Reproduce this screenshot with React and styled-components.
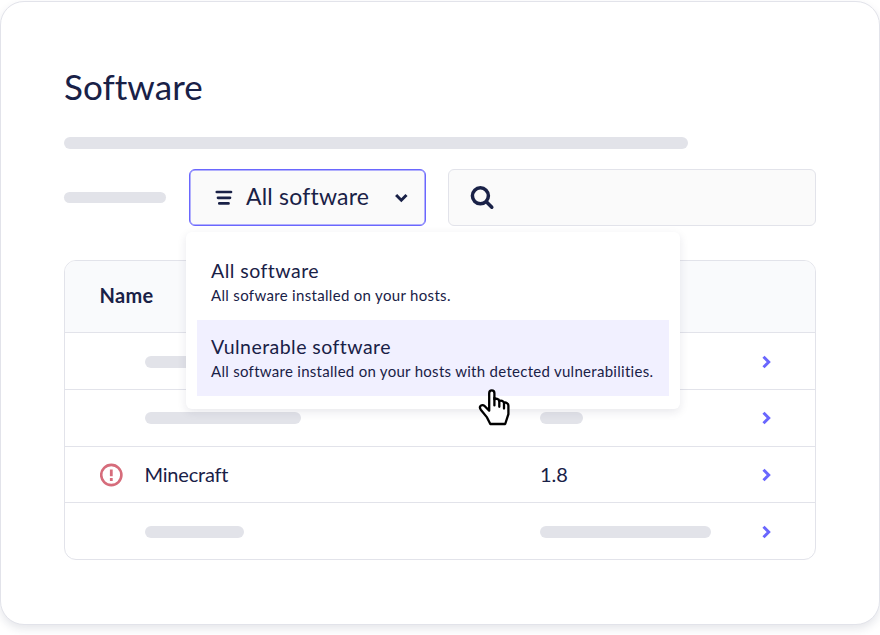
import React from 'react';
import styled, { createGlobalStyle } from 'styled-components';

const GlobalStyle = createGlobalStyle`
  * { box-sizing: border-box; }
  body {
    margin: 0;
    background: #fff;
    color: #192147;
    font-family: Lato, "Open Sans", sans-serif;
    overflow: hidden;
  }
  svg { display: block; flex: none; }
`;

const Page = styled.div`
  height: 635px;
  padding-top: 1px;
`;

const Card = styled.main`
  width: 880px;
  height: 624px;
  padding: 62px 63px 0;
  border: 1px solid #e2e3ea;
  border-radius: 24px;
  background: #fff;
  box-shadow: 0 4px 8px rgba(25, 33, 71, 0.11);
`;

const Title = styled.h1`
  margin: 0 0 29px;
  height: 44px;
  font-size: 35px;
  line-height: 44px;
  font-weight: 400;
  letter-spacing: ${(p) => p.$tracking}px;
`;

const Bar = styled.span`
  display: block;
  flex: none;
  width: ${(p) => p.$width}px;
  height: ${(p) => p.$height || 12}px;
  border-radius: 6px;
  background: #e2e3e9;
`;

const Controls = styled.div`
  display: flex;
  align-items: center;
  height: 57px;
  margin: 20px 0 34px;
`;

const SelectWrap = styled.div`
  position: relative;
  margin: 0 22px 0 23px;
`;

const SelectButton = styled.button`
  display: flex;
  align-items: center;
  width: 237px;
  height: 57px;
  padding: 0 16px 0 24.5px;
  border: 1px solid #6a67fe;
  border-radius: 6px;
  background: #fafafa;
  box-shadow: inset 0 0 0 0.5px #6a67fe;
  color: inherit;
  font-family: inherit;
  text-align: left;
`;

const SelectLabel = styled.span`
  flex: 1;
  margin: -4px 0 0 13.5px;
  font-size: 23px;
  line-height: 30px;
  letter-spacing: 0.2px;
  white-space: nowrap;
`;

const Search = styled.div`
  display: flex;
  align-items: center;
  flex: 1;
  height: 57px;
  padding-left: 21px;
  border: 1px solid #e2e3ea;
  border-radius: 6px;
  background: #fafafa;
`;

const Menu = styled.div`
  position: absolute;
  z-index: 2;
  top: 63px;
  left: -3px;
  width: 494px;
  height: 177px;
  padding: 12px 11px;
  border-radius: 6px;
  background: #fff;
  box-shadow: 0 3px 10px rgba(25, 33, 71, 0.1);
`;

const Option = styled.div`
  height: 76px;
  padding: 14px 14px 0;
  background: ${(p) => (p.$active ? '#f1f0ff' : 'transparent')};
  white-space: nowrap;
`;

const OptionTitle = styled.div`
  font-size: 19.5px;
  line-height: 26px;
  letter-spacing: ${(p) => p.$tracking}px;
`;

const OptionText = styled.div`
  margin-top: -1px;
  font-size: 15px;
  line-height: 24px;
  letter-spacing: ${(p) => p.$tracking}px;
`;

const Pointer = styled.svg`
  position: absolute;
  top: 156px;
  left: 291.5px;
`;

const Table = styled.section`
  height: 300px;
  border: 1px solid #e2e3ea;
  border-radius: 12px;
  overflow: hidden;
`;

const TableHead = styled.div`
  height: 71.4px;
  padding-left: 34.5px;
  background: #f9fafc;
  font-size: 20px;
  font-weight: 700;
  line-height: 69px;
  letter-spacing: 0.35px;
`;

const Row = styled.div`
  display: grid;
  grid-template-columns: 45px 395.5px 221px 10px;
  align-items: center;
  height: 56.7px;
  padding: 1px 0 0 34.5px;
  border-top: 1px solid #e2e3ea;
`;

const Cell = styled.span`
  margin-top: -2px;
  font-size: 20px;
  line-height: 26px;
  letter-spacing: ${(p) => p.$tracking || 0}px;
`;

function MenuIcon() {
  return (
    <svg width="18" height="16" viewBox="0 0 18 16" fill="none" stroke="#192147" strokeWidth="2.7" strokeLinecap="round">
      <path d="M1.8 2h14.2M3 7.8h12M4.3 13.4h9.2" />
    </svg>
  );
}

function DownIcon() {
  return (
    <svg width="15" height="12" viewBox="0 0 15 12" fill="none" stroke="#192147" strokeWidth="3">
      <path d="m2.1 3 5.2 5.2L12.5 3" />
    </svg>
  );
}

function SearchIcon() {
  return (
    <svg width="26" height="26" viewBox="0 0 26 26" fill="none" stroke="#192147" strokeWidth="3.5" strokeLinecap="round">
      <circle cx="10.4" cy="10.8" r="8" />
      <path d="m16.8 17.2 5 5" />
    </svg>
  );
}

function NextIcon() {
  return (
    <svg width="10" height="14" viewBox="0 0 10 14" fill="none" stroke="#6a67fe" strokeWidth="3">
      <path d="m2.5 1.8 5.2 5.2-5.2 5.2" />
    </svg>
  );
}

function AlertIcon() {
  return (
    <svg width="24" height="24" viewBox="0 0 24 24" fill="none" stroke="#d66c7b" strokeWidth="2.6">
      <circle cx="11.3" cy="12" r="10.1" />
      <path d="M11.3 6.5v6.8M11.3 15.1v2.8" strokeWidth="2.8" />
    </svg>
  );
}

function HandPointer() {
  return (
    <Pointer width="34" height="40" viewBox="0 0 34 40" fill="#fff" stroke="#000" strokeWidth="2.3" strokeLinejoin="round" strokeLinecap="round">
      <path d="M11.2 22.6V5.2c0-3.8 5.2-3.8 5.2 0v6.1c1.2-1 4.5-.7 4.9 1.8 1.3-.9 4.5-.4 4.7 1.8 1.5-.9 4.4 0 4.4 2.8v8.5L27.2 36H12.3L9 29.4l-6.2-7.7c-2.5-3.6 1.3-5.9 4-3.5z" />
      <path d="M16.4 10v7.4M21.3 12.8v6M26 14.8v5.7" fill="none" />
    </Pointer>
  );
}

const rows = [
  { nameBar: 156 },
  { nameBar: 156, versionBar: 43 },
  { name: 'Minecraft', version: '1.8', alert: true },
  { nameBar: 99.5, versionBar: 170.5 },
];

export default function App() {
  return (
    <Page>
      <GlobalStyle />
      <Card>
        <Title $tracking={0.05}>Software</Title>
        <Bar $width={624} />
        <Controls>
          <Bar $width={102} $height={11} />
          <SelectWrap>
            <SelectButton>
              <MenuIcon />
              <SelectLabel>All software</SelectLabel>
              <DownIcon />
            </SelectButton>
            <Menu>
              <Option>
                <OptionTitle $tracking={0.48}>All software</OptionTitle>
                <OptionText $tracking={0.32}>All sofware installed on your hosts.</OptionText>
              </Option>
              <Option $active>
                <OptionTitle $tracking={0.46}>Vulnerable software</OptionTitle>
                <OptionText $tracking={0.285}>All software installed on your hosts with detected vulnerabilities.</OptionText>
              </Option>
              <HandPointer />
            </Menu>
          </SelectWrap>
          <Search><SearchIcon /></Search>
        </Controls>
        <Table>
          <TableHead>Name</TableHead>
          {rows.map((row, index) => (
            <Row key={index}>
              <span>{row.alert && <AlertIcon />}</span>
              {row.name ? <Cell $tracking={-0.2}>{row.name}</Cell> : <Bar $width={row.nameBar} />}
              {row.version ? <Cell>{row.version}</Cell> : <Bar $width={row.versionBar || 0} />}
              <NextIcon />
            </Row>
          ))}
        </Table>
      </Card>
    </Page>
  );
}
